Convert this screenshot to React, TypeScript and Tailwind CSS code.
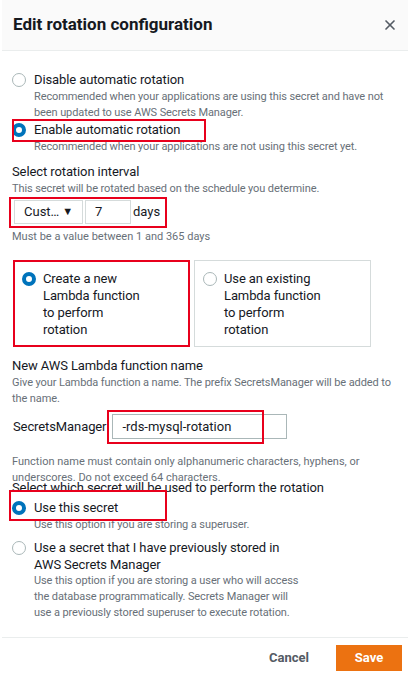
import { X } from 'lucide-react';

function Radio({ checked }: { checked?: boolean }) {
  return checked ? (
    <span className="mt-[2px] w-[14px] h-[14px] shrink-0 rounded-full border-[4px] border-[#0073bb] bg-white" />
  ) : (
    <span className="mt-[2px] w-[14px] h-[14px] shrink-0 rounded-full border border-[#aab7b8] bg-white" />
  );
}

function RadioItem({ checked, label, desc }: { checked?: boolean; label: React.ReactNode; desc?: React.ReactNode }) {
  return (
    <div className="flex gap-[8px]">
      <Radio checked={checked} />
      <div>
        <div className="text-[13px] leading-[18px] tracking-[-0.1px] text-[#16191f]">{label}</div>
        {desc && <div className="text-[11px] leading-[16px] tracking-[-0.1px] text-[#687078]">{desc}</div>}
      </div>
    </div>
  );
}

function Tile({ checked, text }: { checked?: boolean; text: React.ReactNode }) {
  return (
    <div className="w-[177px] h-[87px] border border-[#d5dbdb] pl-[8px] pt-[9px] flex gap-[7px]">
      <Radio checked={checked} />
      <div className="text-[13px] leading-[17px] tracking-[-0.1px] text-[#16191f]">{text}</div>
    </div>
  );
}

export default function App() {
  return (
    <div className="relative w-[410px] h-[676px] bg-white overflow-hidden font-['Roboto',sans-serif] text-[#16191f]">
      {/* Header */}
      <div className="h-[51px] bg-[#fafafa] border-b border-[#eaeded] mx-[2px] pl-[11px] pr-[10px] flex items-center justify-between">
        <h1 className="text-[17px] font-bold text-[#16191f]">Edit rotation configuration</h1>
        <X className="w-[16px] h-[16px] text-[#545b64]" strokeWidth={2.5} />
      </div>

      {/* Body */}
      <div className="px-[12px] pt-[20px]">
        <RadioItem
          label="Disable automatic rotation"
          desc={<>Recommended when your applications are using this secret and have not<br />been updated to use AWS Secrets Manager.</>}
        />
        <RadioItem
          checked
          label="Enable automatic rotation"
          desc="Recommended when your applications are not using this secret yet."
        />

        <div className="mt-[8px] text-[13px] leading-[18px] tracking-[-0.1px]">Select rotation interval</div>
        <div className="text-[11px] leading-[16px] tracking-[-0.1px] text-[#687078]">This secret will be rotated based on the schedule you determine.</div>
        <div className="mt-[3px] flex items-center">
          <div className="ml-[2px] w-[69px] h-[24px] border border-[#d5dbdb] bg-white flex items-center pl-[9px] text-[13px]">
            Cust…<span className="ml-[3px] text-[11px] text-[#16191f]">▼</span>
          </div>
          <div className="ml-[2px] w-[46px] h-[24px] border border-[#d5dbdb] bg-white flex items-center pl-[9px] text-[13px]">7</div>
          <span className="ml-[2px] text-[13px]">days</span>
        </div>
        <div className="mt-[6px] text-[11px] leading-[14px] text-[#687078]">Must be a value between 1 and 365 days</div>

        <div className="mt-[16px] ml-[1px] flex gap-[4px]">
          <Tile checked text={<>Create a new<br />Lambda function<br />to perform<br />rotation</>} />
          <Tile text={<>Use an existing<br />Lambda function<br />to perform<br />rotation</>} />
        </div>

        <div className="mt-[10px] text-[13px] leading-[18px] tracking-[-0.1px]">New AWS Lambda function name</div>
        <div className="text-[11px] leading-[16px] tracking-[-0.1px] text-[#687078]">
          Give your Lambda function a name. The prefix SecretsManager will be added to<br />the name.
        </div>
        <div className="mt-[7px] flex items-center">
          <span className="ml-[1px] text-[13px] tracking-[-0.1px]">SecretsManager</span>
          <div className="ml-[6px] w-[175px] h-[25px] border border-[#aab7b8] bg-white flex items-center pl-[9px] text-[13px]">
            -rds-mysql-rotation
          </div>
        </div>
        <div className="mt-[15px] text-[11px] leading-[16px] text-[#687078]">
          Function name must contain only alphanumeric characters, hyphens, or<br />underscores. Do not exceed 64 characters.
        </div>
        <div className="mt-[-5px] text-[13px] leading-[14px] tracking-[-0.1px]">Select which secret will be used to perform the rotation</div>

        <div className="mt-[4px]">
          <RadioItem checked label="Use this secret" desc="Use this option if you are storing a superuser." />
        </div>
        <div className="mt-[6px] flex gap-[8px]">
          <Radio />
          <div>
            <div className="text-[13px] leading-[17px] tracking-[-0.1px]">Use a secret that I have previously stored in<br />AWS Secrets Manager</div>
            <div className="text-[11px] leading-[16px] tracking-[-0.1px] text-[#687078]">
              Use this option if you are storing a user who will access<br />the database programmatically. Secrets Manager will<br />use a previously stored superuser to execute rotation.
            </div>
          </div>
        </div>
      </div>

      {/* Footer */}
      <div className="absolute left-[2px] right-[2px] top-[637px] border-t border-[#eaeded] pt-[7px] pr-[6px] flex items-center justify-end gap-[27px]">
        <button className="text-[13px] font-bold text-[#545b64]">Cancel</button>
        <button className="w-[66px] h-[26px] bg-[#ec7211] text-white text-[13px] font-bold">Save</button>
      </div>

      {/* Annotation boxes */}
      <div className="absolute left-[12px] top-[119px] w-[194px] h-[23px] border-2 border-[#e8001c] pointer-events-none" />
      <div className="absolute left-[9px] top-[197px] w-[158px] h-[31px] border-2 border-[#e8001c] pointer-events-none" />
      <div className="absolute left-[13px] top-[260px] w-[177px] h-[87px] border-2 border-[#e8001c] pointer-events-none" />
      <div className="absolute left-[107px] top-[410px] w-[157px] h-[34px] border-2 border-[#e8001c] pointer-events-none" />
      <div className="absolute left-[9px] top-[490px] w-[158px] h-[31px] border-2 border-[#e8001c] pointer-events-none" />
    </div>
  );
}
